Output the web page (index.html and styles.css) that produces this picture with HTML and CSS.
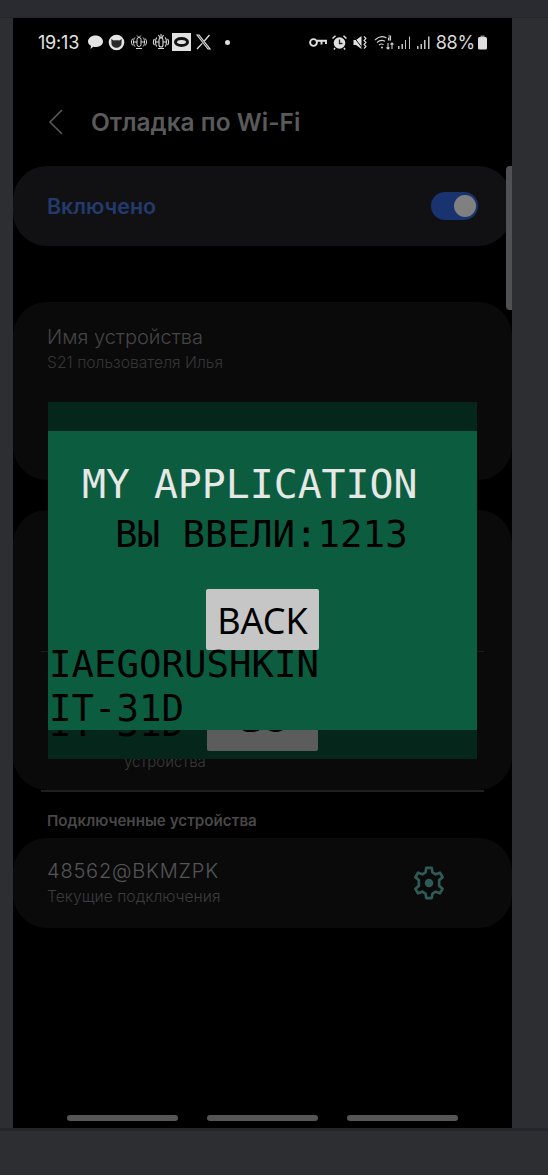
FILE: index.html
```html
<!DOCTYPE html>
<html lang="en">
<head>
  <meta charset="UTF-8" />
  <title>Отладка по Wi-Fi</title>
  <link rel="stylesheet" href="styles.css">
</head>
<body>
  <div class="topbar"></div>

  <div class="middle">
    <div class="phone">
      <!-- Status bar -->
      <div class="status">
        <span class="time">19:13</span>
        <svg class="ico m-bubble" width="17" height="16" viewBox="0 0 17 16"><path d="M8.500 1.500C12.700 1.500 16 4.200 16 7.500S12.700 13 8.500 13C7.700 13 7 13 6.300 12.800L3.500 15L4 11.800C2 10.800 1 9.300 1 7.500C1 4.200 4.300 1.500 8.500 1.500Z" fill="#e4e4e4"/></svg>
        <svg class="ico m-cat" width="17" height="17" viewBox="0 0 17 17"><circle cx="8.500" cy="8.500" r="7.800" fill="#e4e4e4"/><path d="M3.300 5L5.800 6.500C7.500 6 9.500 6 11.200 6.500L13.700 5L13.500 9.500C13.500 12 11 13.800 8.500 13.800S3.500 12 3.500 9.500Z" fill="#2a2a2a"/></svg>
        <svg class="ico m-bug" width="18" height="16" viewBox="0 0 18 16" fill="none" stroke="#d8d8d8" stroke-width="1"><rect x="7" y="3.500" width="4" height="9" rx="2"/><path d="M5 3.500C3 5 3 11 5 12.500M13 3.500C15 5 15 11 13 12.500M2.800 4.500C1 6.500 1 9.500 2.800 11.500M15.200 4.500C17 6.500 17 9.500 15.200 11.500M7 1.500L9 3.500L11 1.500M6 14.500H12M3 8H7M11 8H15"/></svg>
        <svg class="ico m-bug2" width="18" height="18" viewBox="0 0 18 18" fill="none" stroke="#d8d8d8" stroke-width="1.100"><rect x="7" y="5" width="4" height="9" rx="2"/><path d="M5 4.500C3 6 3 12 5 13.500M13 4.500C15 6 15 12 13 13.500M2.500 6C1 7.500 1 10.500 2.500 12M15.500 6C17 7.500 17 10.500 15.500 12M9 1V5M6.500 2L8 5M11.500 2L10 5M6 15.500H12M3 9H7M11 9H15"/></svg>
        <span class="box-icon"><span class="ring"></span></span>
        <svg class="ico m-x" width="17" height="16" viewBox="0 0 17 16" fill="none" stroke="#e0e0e0"><path d="M2 1L13 15H15L4 1Z" stroke-width="1.200"/><path d="M14.500 1L9.300 7M7.300 9.400L2 15" stroke-width="1.300"/></svg>
        <span class="dot"></span>
        <span class="grow"></span>
        <svg class="ico" width="18" height="11" viewBox="0 0 18 11" fill="none" stroke="#e0e0e0" stroke-width="1.900"><circle cx="4.500" cy="5.500" r="3.400"/><path d="M8 3.800H17V7M12.500 3.800V7.500"/></svg>
        <svg class="ico m-alarm" width="15" height="15" viewBox="0 0 15 15"><circle cx="7.500" cy="8" r="5.800" fill="#e0e0e0"/><path d="M7.500 4.500V8.500H10.500" fill="none" stroke="#222" stroke-width="1.300"/><path d="M0.500 3.500L3.500 0.800M14.500 3.500L11.500 0.800M3 13L2 14.500M12 13L13 14.500" stroke="#e0e0e0" stroke-width="1.500"/></svg>
        <svg class="ico m-mute" width="14" height="15" viewBox="0 0 14 15"><path d="M0.500 5H3L8.500 1V14L3 10H0.500Z" fill="#e0e0e0"/><path d="M0.500 1.500L10 14" stroke="#111" stroke-width="1"/><path d="M11 1.500L13 3.500L11 5.500L13 7.500L11 9.500L13 11.500L11 13.500" fill="none" stroke="#e0e0e0" stroke-width="1.100"/></svg>
        <svg class="ico m-wifi" width="20" height="15" viewBox="0 0 20 15" fill="none" stroke="#d0d0d0" stroke-width="1.100"><path d="M1 5C4.500 1.500 9 1 12.500 3M3 7.500C5.500 5.200 8.500 5 11 6.200M5 10C6.500 8.800 8 8.700 9.500 9.500"/><circle cx="8" cy="12.500" r="1" fill="#d0d0d0" stroke="none"/><path d="M14 8V14M12.500 12.500L14 14L15.500 12.500M18 14V8M16.500 9.500L18 8L19.500 9.500"/><path d="M14.500 1H16.500V5H14.500V3H16.500"/></svg>
        <svg class="ico m-sig1" width="13" height="13" viewBox="0 0 13 13" fill="#c4c4c4"><rect x="0" y="10" width="1.500" height="3"/><rect x="3.500" y="8" width="1.500" height="5"/><rect x="7" y="4" width="1" height="9"/><rect x="11" y="0.500" width="1" height="12.500"/></svg>
        <svg class="ico m-sig2" width="13" height="13" viewBox="0 0 13 13" fill="#c4c4c4"><rect x="0" y="10" width="1.500" height="3"/><rect x="3.500" y="8" width="1.500" height="5"/><rect x="7" y="4" width="1.500" height="9"/><rect x="11" y="0.500" width="1.500" height="12.500"/></svg>
        <span class="pct">88%</span>
        <svg class="ico" width="11" height="15" viewBox="0 0 11 15"><path d="M3.500 0.500H7.500V2H3.500Z" fill="#8a8a8a"/><rect x="1" y="2" width="9" height="12.500" rx="1.500" fill="#dedede"/></svg>
      </div>

      <!-- Header -->
      <div class="header">
        <svg width="16" height="26" viewBox="0 0 16 26" fill="none" stroke="#5c5c5c" stroke-width="1.500"><path d="M14 1L2 13L14 25"/></svg>
        <h1>Отладка по Wi-Fi</h1>
      </div>

      <div class="card toggle-card">
        <span class="on-label">Включено</span>
        <span class="switch"><span class="knob"></span></span>
      </div>

      <div class="card name-card">
        <div class="row-title">Имя устройства</div>
        <div class="row-sub">S21 пользователя Илья</div>
      </div>

      <div class="card pair-card">
        <div class="pair-line"></div>
        <div class="ghost-sub">устройства</div>
      </div>

      <div class="divider"></div>
      <div class="section-label">Подключенные устройства</div>

      <div class="card device-card">
        <div>
          <div class="row-title">48562@BKMZPK</div>
          <div class="row-sub">Текущие подключения</div>
        </div>
        <svg class="gear" width="38" height="38" viewBox="0 0 24 24" fill="none" stroke="#2f5b57" stroke-width="1.700" stroke-linejoin="round"><path d="M10.300 2.500H13.700L14.200 5.300L16.200 6.500L18.900 5.500L20.600 8.400L18.400 10.200V13.800L20.600 15.600L18.900 18.500L16.200 17.500L14.200 18.700L13.700 21.500H10.300L9.800 18.700L7.800 17.500L5.100 18.500L3.400 15.600L5.600 13.800V10.200L3.400 8.400L5.100 5.500L7.800 6.500L9.800 5.300Z"/><circle cx="12" cy="12" r="2.700" fill="#2f5b57" stroke="none"/></svg>
      </div>

      <div class="navbar">
        <span class="nav-pill"></span>
        <span class="nav-pill"></span>
        <span class="nav-pill"></span>
      </div>

      <!-- Dialog over the settings page -->
      <div class="overlay">
        <div class="app">
          <div class="app-title">MY APPLICATION</div>
          <div class="app-text">ВЫ ВВЕЛИ:1213</div>
          <div class="back">BACK</div>
          <div class="app-name">IAEGORUSHKIN<br>IT-31D</div>
        </div>
        <div class="under">
          <div class="ghost">IT-31D</div>
          <div class="ghost-btn"><div class="ghost-go">GO</div></div>
        </div>
      </div>
    </div>
    <div class="scroll"></div>
  </div>

  <div class="bottombar"></div>
</body>
</html>
```

FILE: styles.css
```css
html, body { margin: 0; padding: 0; }
body { width: 548px; height: 1175px; background: #2d2e32; font-family: "Inter", "Noto Sans", sans-serif; overflow: hidden; }
.topbar { height: 17px; border-bottom: 1px solid #25262a; background: #2a2b30; }
.bottombar { height: 44px; border-top: 3px solid #24262b; }

.middle { position: relative; height: 1110px; padding-left: 13px; }
.phone { position: relative; width: 499px; height: 1110px; background: #000; overflow: hidden; }
.scroll { position: absolute; left: 506px; top: 148px; width: 6px; height: 144px; background: #505154; border-radius: 4px 0 0 4px; }

.status { display: flex; align-items: center; height: 20px; padding: 14px 24px 0 25px; color: #e4e4e4; }
.time { font-size: 18px; letter-spacing: -0.2px; width: 49px; flex: none; }
.ico { display: block; flex: none; }
.m-cat { margin-left: 4px; }
.m-bug { margin-left: 5px; }
.m-bug2 { margin-left: 4px; }
.m-x { margin-left: 4px; }
.m-alarm { margin-left: 5px; }
.m-mute { margin-left: 6px; }
.m-wifi { margin-left: 7px; }
.m-sig1 { margin-left: 4px; }
.m-sig2 { margin-left: 6px; }
.box-icon { display: flex; align-items: center; justify-content: center; width: 19px; height: 18px; background: #e0e0e0; margin-left: 2px; flex: none; }
.ring { width: 9px; height: 4px; border: 3px solid #111; border-radius: 50%; }
.dot { width: 5px; height: 5px; background: #ddd; border-radius: 50%; margin-left: 13px; }
.grow { flex: 1; }
.pct { font-size: 18px; margin-left: 6px; margin-right: 2px; color: #d8d8d8; letter-spacing: -0.2px; }

.header { display: flex; align-items: center; gap: 27px; height: 40px; padding: 50px 0 0 35px; }
h1 { margin: 0; font-size: 24.5px; font-weight: 600; color: #5a5a5a; }

.card { background: #0a0a0b; border-radius: 34px; box-sizing: border-box; }
.toggle-card { display: flex; align-items: center; justify-content: space-between; height: 80px; margin-top: 24px; padding: 0 34px; background: #111113; }
.on-label { font-size: 21.4px; font-weight: 600; color: #233a6c; }
.switch { display: block; width: 47px; height: 28px; border-radius: 14px; background: #18336f; position: relative; }
.knob { position: absolute; right: 2px; top: 3px; width: 22px; height: 22px; border-radius: 50%; background: #808080; }

.name-card { height: 178px; margin-top: 56px; padding: 22px 34px; }
.row-title { font-size: 20px; font-weight: 300; color: #454545; line-height: 26px; }
.row-sub { font-size: 15.7px; font-weight: 300; color: #363636; line-height: 25px; }

.pair-card { position: relative; height: 280px; margin-top: 30px; }
.pair-line { position: absolute; left: 28px; right: 28px; top: 141px; height: 1px; background: #1c1d20; }
.ghost-sub { position: absolute; left: 111px; top: 242px; font-size: 15px; font-weight: 300; color: #3a3a3a; }

.divider { height: 2px; margin: 0 28px; background: #1e1f22; }
.section-label { font-size: 15.2px; font-weight: 600; color: #484848; padding: 19px 0 0 34px; line-height: 20px; }

.device-card { display: flex; align-items: center; justify-content: space-between; height: 90px; margin-top: 7px; padding: 0 64px 0 34px; }
.device-card .row-title { color: #555; letter-spacing: 0.8px; }
.device-card .row-sub { color: #3c3c3c; }

.navbar { position: absolute; left: 54px; top: 1097px; display: flex; gap: 29px; }
.nav-pill { display: block; width: 111px; height: 6px; border-radius: 3px; background: #565656; }

.overlay { position: absolute; left: 35px; top: 384px; width: 429px; height: 357px; background: #05261a; box-sizing: border-box; padding-top: 29px; }
.app { height: 299px; background: #0c5d40; position: relative; font-family: "DejaVu Sans Mono", monospace; color: #000; font-size: 37.4px; }
.app-title { padding: 32px 0 0 34px; color: #e6e8e6; line-height: 42px; font-size: 39.8px; }
.app-text { padding: 8px 0 0 67px; line-height: 42px; }
.back { position: absolute; left: 158px; top: 158px; width: 113px; height: 61px; border-radius: 2px; background: #c6c6c6; font-family: "Noto Sans", sans-serif; font-size: 36px; line-height: 64px; text-align: center; }
.app-name { position: absolute; left: 1px; top: 211px; line-height: 44px; }

/* the page behind the dialog, only its lower edge shows */
.under { position: relative; height: 29px; overflow: hidden; font-family: "DejaVu Sans Mono", monospace; font-size: 37.4px; color: #000; }
.ghost { position: absolute; left: 1px; top: -29px; line-height: 44px; }
.ghost-btn { position: absolute; left: 159px; top: 0; width: 111px; height: 21px; background: #5c5c5c; border-radius: 0 0 2px 2px; overflow: hidden; font-family: "Noto Sans", sans-serif; font-size: 36px; text-align: center; }
.ghost-go { margin-top: -36px; line-height: 50px; }
```
